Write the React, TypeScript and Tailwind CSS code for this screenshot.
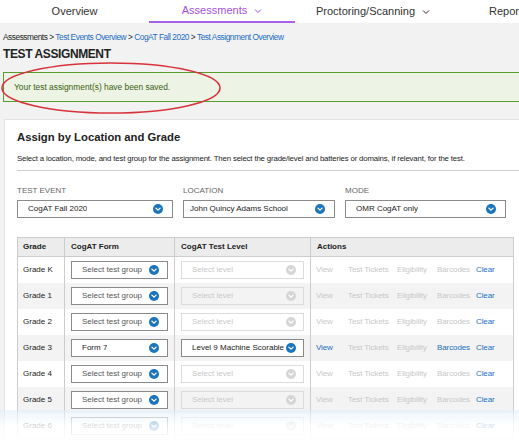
import React from 'react';

const FONT = { fontFamily: '"Liberation Sans", Arial, sans-serif' };

function Chevron({ disabled }: { disabled?: boolean }) {
  return (
    <svg width="10" height="10" viewBox="0 0 10 10" className="shrink-0">
      <circle cx="5" cy="5" r="5" fill={disabled ? '#d6d6d6' : '#1b75bc'} />
      <path d="M2.9 4.1 L5 6.1 L7.1 4.1" fill="none" stroke="#fff" strokeWidth="1.3" strokeLinecap="round" strokeLinejoin="round" />
    </svg>
  );
}

function NavCaret() {
  return (
    <svg width="8" height="6" viewBox="0 0 8 6" className="ml-[7px] mt-[1px]">
      <path d="M1 1.5 L4 4.5 L7 1.5" fill="none" stroke="currentColor" strokeWidth="1" />
    </svg>
  );
}

function Select({ value, placeholder, disabled, className }: { value?: string; placeholder?: string; disabled?: boolean; className: string }) {
  return (
    <div
      className={`flex items-center justify-between border ${disabled ? 'border-[#dcdcdc]' : 'border-[#8a8a8a] bg-white'} ${className}`}
    >
      <span className={`truncate text-[8px] leading-[10px] ${value ? 'text-[#222]' : disabled ? 'text-[#c9c9c9]' : 'text-[#555]'}`}>
        {value ?? placeholder}
      </span>
      <Chevron disabled={disabled} />
    </div>
  );
}

const ROWS = [
  { grade: 'Grade K' },
  { grade: 'Grade 1' },
  { grade: 'Grade 2' },
  { grade: 'Grade 3', form: 'Form 7', level: 'Level 9 Machine Scorable' },
  { grade: 'Grade 4' },
  { grade: 'Grade 5' },
  { grade: 'Grade 6' },
];

export default function App() {
  return (
    <div className="relative w-[519px] h-[442px] overflow-hidden bg-[#f2f2f2] leading-none" style={FONT}>
      {/* top nav */}
      <div className="flex h-[23px] bg-white text-[11px] text-[#333]">
        <div className="w-[149px] shrink-0 flex items-center justify-center">Overview</div>
        <div className="w-[146px] shrink-0 flex items-center justify-center text-[#a34fe0] border-b-[2px] border-[#a860e8]">
          Assessments<NavCaret />
        </div>
        <div className="w-[146px] shrink-0 flex items-center justify-center pl-[10px]">
          Proctoring/Scanning<NavCaret />
        </div>
        <div className="shrink-0 flex items-center pl-[48px] whitespace-nowrap">Reports</div>
      </div>

      <div className="pl-[3px]">
        <div className="mt-[9px] text-[8.3px] leading-[10px] tracking-[-0.45px] whitespace-nowrap text-[#222]">
          Assessments &gt; <span className="text-[#1b6ec2]">Test Events Overview</span> &gt;{' '}
          <span className="text-[#1b6ec2]">CogAT Fall 2020</span> &gt;{' '}
          <span className="text-[#1b6ec2]">Test Assignment Overview</span>
        </div>
        <div className="mt-[5px] text-[12px] leading-[14px] font-bold tracking-[-0.4px] text-[#222]">TEST ASSIGNMENT</div>

        <div className="mt-[11px] h-[30px] w-[530px] flex items-center pl-[10px] bg-[#edf3e5] border border-[#5a9c2c] text-[8.4px] text-[#38620f]">
          Your test assignment(s) have been saved.
        </div>

        {/* card */}
        <div className="mt-[17px] ml-[1px] w-[530px] bg-white border border-[#e3e3e3] pl-[12px] pt-[10px] h-[400px]">
          <div className="text-[11.3px] leading-[14px] font-bold text-[#222]">Assign by Location and Grade</div>
          <div className="mt-[10px] text-[7.8px] leading-[10px] text-[#222] whitespace-nowrap tracking-[-0.15px]">
            Select a location, mode, and test group for the assignment. Then select the grade/level and batteries or domains, if relevant, for the test.
          </div>
          <div className="mt-[6px] border-t border-[#cfcfcf]" />

          <div className="mt-[15px] flex text-[8px] leading-[10px] text-[#666]">
            <div className="w-[166px]">
              <div>TEST EVENT</div>
              <Select value="CogAT Fall 2020" className="mt-[4px] w-[156px] h-[18px] pl-[10px] pr-[9px]" />
            </div>
            <div className="w-[162px]">
              <div>LOCATION</div>
              <Select value="John Quincy Adams School" className="mt-[4px] w-[152px] h-[18px] pl-[6px] pr-[9px]" />
            </div>
            <div>
              <div>MODE</div>
              <Select value="OMR CogAT only" className="mt-[4px] w-[161px] h-[18px] pl-[10px] pr-[9px]" />
            </div>
          </div>

          {/* table */}
          <div className="mt-[19px] w-[497px] border border-[#cccccc]">
            <div className="flex h-[19px] bg-[#ececec] text-[8px] font-bold text-[#222] border-b border-[#cccccc]">
              <div className="w-[47px] pl-[5px] flex items-center border-r border-[#cccccc]">Grade</div>
              <div className="w-[110px] pl-[6px] flex items-center border-r border-[#cccccc]">CogAT Form</div>
              <div className="w-[136px] pl-[6px] flex items-center border-r border-[#cccccc]">CogAT Test Level</div>
              <div className="flex-1 pl-[6px] flex items-center">Actions</div>
            </div>
            {ROWS.map((r, i) => {
              const set = !!r.form;
              return (
                <div key={r.grade} className={`flex h-[26px] text-[8px] ${i % 2 ? 'bg-[#f3f3f3]' : 'bg-white'}`}>
                  <div className="w-[47px] pl-[5px] flex items-center border-r border-[#cccccc] text-[#222]">{r.grade}</div>
                  <div className="w-[110px] flex items-center pl-[6px] border-r border-[#cccccc]">
                    <Select
                      value={r.form}
                      placeholder="Select test group"
                      className="w-[97px] h-[18px] pl-[10px] pr-[8px]"
                    />
                  </div>
                  <div className="w-[136px] flex items-center pl-[6px] border-r border-[#cccccc]">
                    <Select
                      value={r.level}
                      placeholder="Select level"
                      disabled={!set}
                      className="w-[123px] h-[18px] pl-[10px] pr-[7px]"
                    />
                  </div>
                  <div className="flex-1 flex items-center pl-[5px] text-[#c8c8c8] whitespace-nowrap tracking-[-0.1px]">
                    <span className={`w-[32px] ${set ? 'text-[#1b6ec2]' : ''}`}>View</span>
                    <span className="w-[49px]">Test Tickets</span>
                    <span className="w-[40px]">Eligibility</span>
                    <span className={`w-[39px] ${set ? 'text-[#1b6ec2]' : ''}`}>Barcodes</span>
                    <span className="text-[#1b6ec2]">Clear</span>
                  </div>
                </div>
              );
            })}
          </div>
        </div>
      </div>

      {/* red annotation ellipse */}
      <svg className="absolute left-0 top-0 pointer-events-none" width="519" height="442">
        <ellipse cx="111" cy="88" rx="109" ry="25" fill="none" stroke="#d6333c" strokeWidth="1.6" />
      </svg>

      {/* bottom fade */}
      <div className="absolute left-0 right-0 bottom-0 h-[32px] bg-gradient-to-b from-[rgba(225,237,250,0.55)] via-[rgba(255,255,255,0.8)] to-white pointer-events-none" />
    </div>
  );
}
